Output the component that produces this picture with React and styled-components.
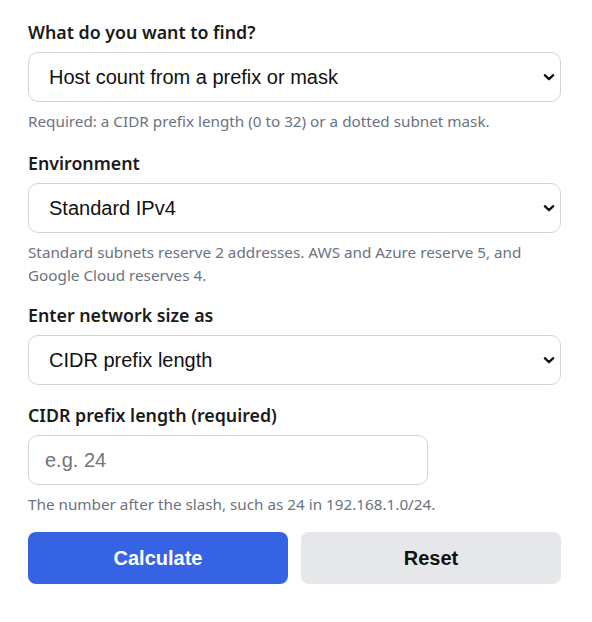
import React, { useState } from 'react'
import styled, { createGlobalStyle } from 'styled-components'

const GlobalStyle = createGlobalStyle`
  body {
    margin: 0;
    background: #ffffff;
    font-family: "Noto Sans", "Open Sans", sans-serif;
    color: #111827;
  }
`;

const Form = styled.form`
  width: 533px;
  padding: 20px 0 0 28px;
  display: flex;
  flex-direction: column;
`;

const Field = styled.div`
  display: flex;
  flex-direction: column;
  margin-bottom: ${(p) => p.$space || 18}px;
`;

const Label = styled.label`
  font-size: 17.8px;
  font-weight: 600;
  line-height: 24px;
  color: #1a1a1a;
  margin-bottom: 8px;
`;

const SelectWrap = styled.div`
  position: relative;
  width: 100%;
`;

const Select = styled.select`
  appearance: none;
  width: 100%;
  height: 50px;
  box-sizing: border-box;
  padding: 0 40px 0 20px;
  border: 1px solid #cfd4dc;
  border-radius: 10px;
  background: #ffffff;
  font-family: "Liberation Sans", Arial, sans-serif;
  font-size: 20px;
  color: #111111;
  outline: none;
`;

const Chevron = styled.svg`
  position: absolute;
  right: 4px;
  top: 50%;
  transform: translateY(-50%);
  pointer-events: none;
`;

const Input = styled.input`
  width: ${(p) => p.$width || '100%'};
  height: 50px;
  box-sizing: border-box;
  padding: 0 16px;
  border: 1px solid #cfd4dc;
  border-radius: 10px;
  font-family: "Liberation Sans", Arial, sans-serif;
  font-size: 20px;
  color: #111111;
  outline: none;

  &::placeholder {
    color: #757575;
  }
`;

const Help = styled.p`
  margin: 8px 0 0;
  font-size: 15.25px;
  line-height: 23px;
  color: #6b7280;
`;

const Actions = styled.div`
  display: grid;
  grid-template-columns: 1fr 1fr;
  gap: 13px;
`;

const Button = styled.button`
  height: 52px;
  border: none;
  border-radius: 8px;
  font-family: "Liberation Sans", Arial, sans-serif;
  font-size: 20px;
  font-weight: 700;
  cursor: pointer;
  background: ${(p) => (p.$primary ? '#3563e3' : '#e5e7eb')};
  color: ${(p) => (p.$primary ? '#ffffff' : '#111111')};
`;

const ChevronIcon = () => (
  <Chevron width="16" height="16" viewBox="0 0 16 16">
    <path d="M3.8 6.2 L8 10.2 L12.2 6.2" fill="none" stroke="#111" strokeWidth="2.3" strokeLinecap="round" strokeLinejoin="round" />
  </Chevron>
);

const Dropdown = ({ id, value, onChange, options }) => (
  <SelectWrap>
    <Select id={id} value={value} onChange={(e) => onChange(e.target.value)}>
      {options.map((o) => (
        <option key={o}>{o}</option>
      ))}
    </Select>
    <ChevronIcon />
  </SelectWrap>
);

export default function App() {
  const [goal, setGoal] = useState('Host count from a prefix or mask');
  const [env, setEnv] = useState('Standard IPv4');
  const [sizeAs, setSizeAs] = useState('CIDR prefix length');
  const [prefix, setPrefix] = useState('');

  return (
    <>
      <GlobalStyle />
      <Form onSubmit={(e) => e.preventDefault()}>
        <Field>
          <Label htmlFor="goal">What do you want to find?</Label>
          <Dropdown
            id="goal"
            value={goal}
            onChange={setGoal}
            options={['Host count from a prefix or mask', 'Prefix from a host count', 'Subnet mask from a prefix']}
          />
          <Help>Required: a CIDR prefix length (0 to 32) or a dotted subnet mask.</Help>
        </Field>
        <Field $space={16}>
          <Label htmlFor="env">Environment</Label>
          <Dropdown
            id="env"
            value={env}
            onChange={setEnv}
            options={['Standard IPv4', 'AWS VPC', 'Azure VNet', 'Google Cloud VPC']}
          />
          <Help>Standard subnets reserve 2 addresses. AWS and Azure reserve 5, and Google Cloud reserves 4.</Help>
        </Field>
        <Field>
          <Label htmlFor="size">Enter network size as</Label>
          <Dropdown
            id="size"
            value={sizeAs}
            onChange={setSizeAs}
            options={['CIDR prefix length', 'Dotted subnet mask']}
          />
        </Field>
        <Field $space={16}>
          <Label htmlFor="prefix">CIDR prefix length (required)</Label>
          <Input
            id="prefix"
            $width="400px"
            placeholder="e.g. 24"
            value={prefix}
            onChange={(e) => setPrefix(e.target.value)}
          />
          <Help>The number after the slash, such as 24 in 192.168.1.0/24.</Help>
        </Field>
        <Actions>
          <Button type="submit" $primary>Calculate</Button>
          <Button type="button" onClick={() => setPrefix('')}>Reset</Button>
        </Actions>
      </Form>
    </>
  )
}
